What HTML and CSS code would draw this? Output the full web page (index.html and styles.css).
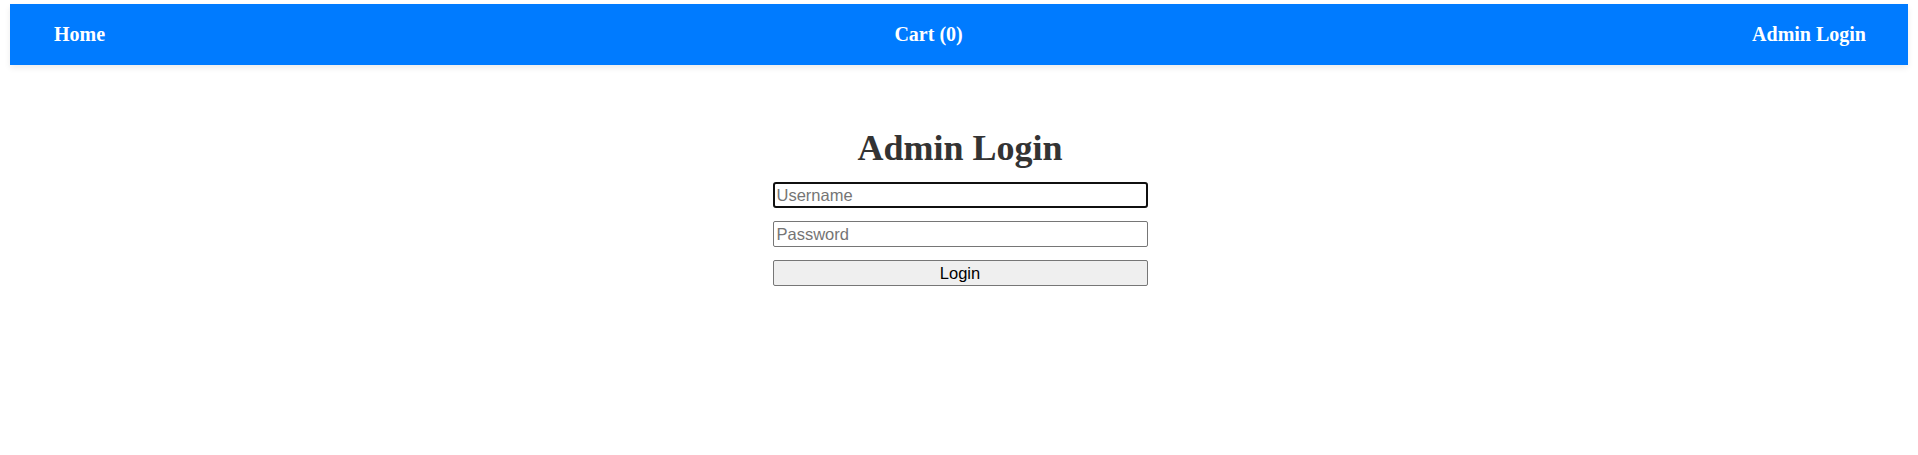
FILE: index.html
```html
<!DOCTYPE html>
<html>
<head>
<meta charset="utf-8">
<title>Admin Login</title>
<link rel="stylesheet" href="styles.css">
</head>
<body>
<nav class="navbar">
  <a class="nav-link" href="#">Home</a>
  <a class="nav-link" href="#">Cart (0)</a>
  <a class="nav-link" href="#">Admin Login</a>
</nav>
<main class="login">
  <h2 class="login-title">Admin Login</h2>
  <form class="login-form">
    <input class="field field-focus" type="text" placeholder="Username">
    <input class="field" type="password" placeholder="Password">
    <button class="login-btn" type="button">Login</button>
  </form>
</main>
</body>
</html>
```
FILE: styles.css
```css
html, body {
  margin: 0;
  padding: 0;
  background: #fff;
  font-family: "Liberation Serif", "Times New Roman", serif;
}
.navbar {
  margin: 4px 10px 0;
  height: 61px;
  box-sizing: border-box;
  padding: 0 42px 0 44px;
  background: #007bff;
  display: flex;
  justify-content: space-between;
  align-items: center;
  box-shadow: 0 3px 6px rgba(0, 0, 0, 0.08);
}
.nav-link {
  color: #fff;
  font-weight: bold;
  font-size: 20px;
  text-decoration: none;
}
.login {
  display: flex;
  flex-direction: column;
  align-items: center;
  padding-left: 2px;
}
.login-title {
  margin: 63px 0 14px;
  font-size: 36px;
  font-weight: bold;
  color: #333;
  line-height: 40px;
}
.login-form {
  width: 375px;
  display: flex;
  flex-direction: column;
  gap: 13px;
}
.field, .login-btn {
  box-sizing: border-box;
  height: 26px;
  width: 100%;
  margin: 0;
  font-family: "Liberation Sans", Arial, sans-serif;
  font-size: 16.5px;
  border: 1px solid #767676;
  border-radius: 2px;
  padding: 1px 3px;
  color: #000;
  background: #fff;
}
.field::placeholder {
  color: #757575;
}
.field-focus {
  border: 2px solid #101010;
  border-radius: 3px;
  padding: 0 2px;
  outline: none;
}
.login-btn {
  background: #efefef;
  text-align: center;
  padding: 0;
}
```
